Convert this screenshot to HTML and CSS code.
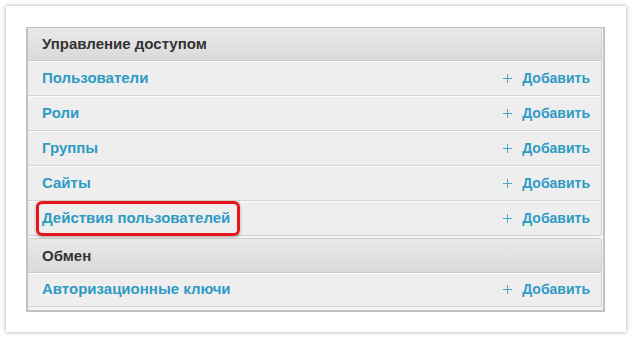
FILE: index.html
```html
<!DOCTYPE html>
<html lang="ru">
<head>
<meta charset="utf-8">
<link rel="stylesheet" href="styles.css">
</head>
<body>
<div class="card">
  <div class="panel">
    <div class="group first">
      <div class="group-head">Управление доступом</div>
      <div class="row"><a class="name">Пользователи</a><a class="add"><svg class="plus" width="9" height="9" viewBox="0 0 9 9"><path d="M4.5 0V9M0 4.5H9"/></svg>Добавить</a></div>
      <div class="row"><a class="name">Роли</a><a class="add"><svg class="plus" width="9" height="9" viewBox="0 0 9 9"><path d="M4.5 0V9M0 4.5H9"/></svg>Добавить</a></div>
      <div class="row"><a class="name">Группы</a><a class="add"><svg class="plus" width="9" height="9" viewBox="0 0 9 9"><path d="M4.5 0V9M0 4.5H9"/></svg>Добавить</a></div>
      <div class="row"><a class="name">Сайты</a><a class="add"><svg class="plus" width="9" height="9" viewBox="0 0 9 9"><path d="M4.5 0V9M0 4.5H9"/></svg>Добавить</a></div>
      <div class="row"><a class="name">Действия пользователей</a><a class="add"><svg class="plus" width="9" height="9" viewBox="0 0 9 9"><path d="M4.5 0V9M0 4.5H9"/></svg>Добавить</a><span class="highlight"></span></div>
    </div>
    <div class="group second">
      <div class="group-head">Обмен</div>
      <div class="row"><a class="name">Авторизационные ключи</a><a class="add"><svg class="plus" width="9" height="9" viewBox="0 0 9 9"><path d="M4.5 0V9M0 4.5H9"/></svg>Добавить</a></div>
    </div>
  </div>
</div>
</body>
</html>
```
FILE: styles.css
```css
html, body {
  margin: 0;
  padding: 0;
  background: #ffffff;
}
body {
  padding: 6px;
  font-family: "Liberation Sans", Arial, sans-serif;
  font-size: 15px;
}
.card {
  width: 579px;
  height: 285px;
  background: #fff;
  box-shadow: 0 0 4px rgba(0,0,0,0.35);
  padding: 21px 21px 20px 20px;
}
.panel {
  border: 2px solid #c2c2c2;
  border-top-width: 1px;
  background: #f4f4f4;
  height: 282px;
  padding: 0 1px 0 0;
}
.group {
  border-right: 1px solid #d2d2d2;
  background: #eeeeee;
}
.group.first {
  border-radius: 0 0 3px 0;
  margin-bottom: 2px;
}
.group.second {
  border-top: 1px solid #d2d2d2;
  border-radius: 3px 3px 0 0;
}
.group-head {
  height: 32px;
  line-height: 32px;
  padding-left: 14px;
  font-weight: bold;
  color: #333;
  background: linear-gradient(#e9e9e9, #dadada);
  border-bottom: 1px solid #c8c8c8;
}
.second .group-head {
  height: 33px;
  line-height: 34px;
}
.row {
  position: relative;
  display: flex;
  align-items: center;
  justify-content: space-between;
  height: 31px;
  padding: 0 11px 2px 14px;
  border-top: 1px solid #fbfbfb;
  border-bottom: 1px solid #d6d6d6;
}
.second .row {
  height: 29px;
  padding-bottom: 3px;
}
.first .row:last-child {
  border-bottom-color: #cfcfcf;
  border-radius: 0 0 3px 0;
}
.name {
  font-weight: bold;
  color: #2e9bc5;
}
.add {
  display: flex;
  align-items: center;
  font-weight: bold;
  font-size: 14px;
  color: #2e9bc5;
}
.plus {
  display: block;
  stroke: #4aa6cc;
  stroke-width: 1;
  fill: none;
  shape-rendering: crispEdges;
  margin-right: 10px;
  margin-top: 2px;
}
.highlight {
  position: absolute;
  left: 8px;
  top: -1px;
  width: 198px;
  height: 29px;
  border: 3px solid #e8141c;
  border-radius: 6px;
  box-shadow: 0 1px 3px rgba(0,0,0,0.35);
}
```
